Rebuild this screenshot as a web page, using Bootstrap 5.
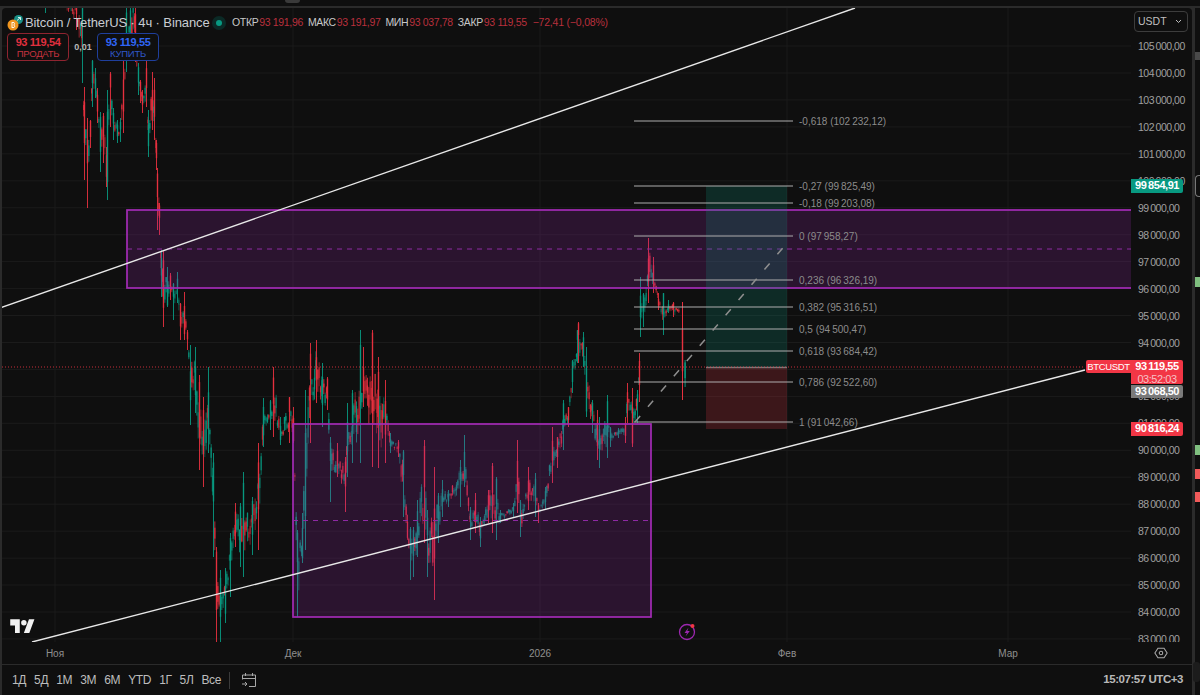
<!DOCTYPE html>
<html lang="ru">
<head>
    <meta charset="UTF-8">
    <meta name="viewport" content="width=device-width, initial-scale=1.0">
    <title>BTCUSDT</title>
    <link href="https://cdn.jsdelivr.net/npm/bootstrap@5.3.0/dist/css/bootstrap.min.css" rel="stylesheet">
    <style>
        html, body { height: 695px; overflow: hidden; }
        body { background: #2b2b2b; color: #c8c8c8; font-family: "Liberation Sans", Arial, sans-serif; font-size: 11px; }
        .top-strip { height: 6px; background: #0f0f0f; margin-bottom: 2px; }
        .top-tab { width: 15px; height: 3px; margin-left: 285px; background: #3a3a3a; border-radius: 0 0 3px 3px; }
        .app-row { height: 687px; }
        .chart-panel { width: 1190px; margin-left: 2px; background: #0f0f0f; border-radius: 4px 4px 0 0; }
        .chart-row { height: 634px; }
        .pane { width: 1129px; height: 634px; overflow: hidden; }
        .pane svg { display: block; }
        .price-axis { width: 61px; height: 634px; overflow: hidden; }

        .legend-row { top: 6px; left: 5px; height: 17px; white-space: nowrap; }
        .legend-title { font-size: 13px; color: #c9ccd2; letter-spacing: -.1px; margin-left: 1px; width: 187px; }
        .market-dot { width: 14px; height: 14px; border-radius: 50%; background: #0b2a26; margin-right: 6px; }
        .market-dot i { width: 6px; height: 6px; border-radius: 50%; background: #089981; display: block; }
        .ohlc { letter-spacing: -.35px; font-size: 10.5px; color: #c8c8c8; margin-right: 5px; }
        .ohlc b { font-weight: 400; color: #b9303d; margin-left: 1px; }
        .ohlc-change { font-size: 10.5px; color: #b9303d; letter-spacing: -.2px; margin-left: 1px; }

        .trade-row { top: 25px; left: 5px; }
        .trade-box { width: 62px; height: 28px; background: #0f0f0f; border: 1px solid; border-radius: 4px; line-height: 1; padding-top: 3px; }
        .trade-box strong { display: block; font-size: 11px; font-weight: 700; letter-spacing: -.4px; margin-bottom: 1px; }
        .trade-box span { display: block; font-size: 9.5px; letter-spacing: -.25px; }
        .sell-box { color: #e0303f; border-color: #8f2430; }
        .sell-box span { color: #c4323f; }
        .buy-box { color: #2f66f5; border-color: #1f3f9c; }
        .buy-box span { color: #2f58c8; }
        .lot-size { width: 28px; font-size: 9px; font-weight: 700; color: #b8b8b8; line-height: 28px; }

        .tv-logo { left: 8px; top: 610px; }
        .symbol-tag { right: 0; top: 352px; width: 45px; height: 13px; line-height: 13px; background: #f23645; color: #fff; font-size: 9.5px; letter-spacing: -.35px; border-radius: 2px 0 0 2px; }
        .bolt-icon { left: 675px; top: 614px; }

        .unit-select { top: 3px; left: 3px; width: 54px; height: 21px; border: 1px solid #3d3d3d; border-radius: 4px; padding: 0 5px 0 3px; font-size: 10.5px; color: #c0c0c0; }
        .axis-price { left: 7px; font-size: 10.5px; letter-spacing: -.5px; color: #a0a0a0; line-height: 12px; white-space: nowrap; }
        .axis-tag { left: 0; width: 52px; color: #fff; font-size: 11px; letter-spacing: -.45px; border-radius: 0 2px 2px 0; line-height: 13px; }
        .tag-up { top: 171px; height: 14px; background: #089981; font-weight: 700; }
        .tag-last { top: 352px; height: 24px; background: #f23645; font-weight: 700; }
        .tag-last em { display: block; font-style: normal; font-weight: 400; color: #f7c1c6; }
        .tag-mark { top: 377px; height: 13px; background: #7a7a7a; font-weight: 700; }
        .tag-stop { top: 414px; height: 14px; background: #f23645; font-weight: 700; }

        .time-axis { height: 22px; }
        .time-label { top: 4px; font-size: 10px; color: #8f8f8f; transform: translateX(-50%); white-space: nowrap; }
        .axis-gear { left: 1152px; top: 4px; }
        .range-bar { height: 31px; border-top: 1px solid #2b2b2b; padding-left: 10px; padding-right: 9px; }
        .range-btn { font-size: 12px; color: #bdbdbd; letter-spacing: -.35px; }
        .range-sep { width: 1px; height: 17px; background: #3a3a3a; margin: 0 11px 0 8px; }
        .clock { font-size: 11.5px; font-weight: 700; color: #b8b8b8; letter-spacing: -.45px; }

        .side-rail { width: 5px; margin-left: 3px; background: #0f0f0f; }
        .rail-item { height: 10px; }
        .rail-gray { margin-top: 44px; height: 8px; background: #4a4a4a; }
        .rail-box { margin-top: 115px; height: 22px; border: 1px solid #777; border-right: 0; border-radius: 4px 0 0 4px; }
        .rail-up-a { margin-top: 80px; background: #7fbf7f; }
        .rail-up-b { margin-top: 158px; background: #7fbf7f; }
        .rail-dn-a { margin-top: 14px; background: #f15a5a; }
        .rail-dn-b { margin-top: 13px; background: #f15a5a; }
        .rail-toggle { left: 1193px; top: 654px; width: 7px; height: 20px; background: #1c1c1c; border-radius: 3px; }
    </style>
</head>
<body>
    <div class="top-strip"><div class="top-tab"></div></div>

    <div class="d-flex app-row position-relative">
        <main class="chart-panel d-flex flex-column">
            <div class="chart-row d-flex">
                <div class="pane position-relative">
                    <svg id="chart" width="1129" height="634" viewBox="2 8 1129 634"></svg>

                    <div class="legend-row position-absolute d-flex align-items-center">
                        <svg width="17" height="17" viewBox="0 0 17 17">
                            <circle cx="11.5" cy="5.5" r="4.5" fill="#1b8f86"/>
                            <path d="M10 6.5 L13.5 3.5 M11 3.5 H13.5 V6" stroke="#d8f2ee" fill="none"/>
                            <circle cx="6" cy="11" r="5.5" fill="#f0951f"/>
                            <path d="M5 8.2 V13.8 M5 8.5 H7 Q8.2 9.8 6.8 11 Q8.6 12.2 7 13.5 H5" stroke="#fff" stroke-width=".9" fill="none"/>
                        </svg>
                        <span class="legend-title">Bitcoin / TetherUS · 4ч · Binance</span>
                        <span class="market-dot d-flex align-items-center justify-content-center"><i></i></span>
                        <span class="ohlc">ОТКР<b>93 191,96</b></span>
                        <span class="ohlc">МАКС<b>93 191,97</b></span>
                        <span class="ohlc">МИН<b>93 037,78</b></span>
                        <span class="ohlc">ЗАКР<b>93 119,55</b></span>
                        <span class="ohlc-change">−72,41 (−0,08%)</span>
                    </div>

                    <div class="trade-row position-absolute d-flex text-center">
                        <div class="trade-box sell-box"><strong>93 119,54</strong><span>ПРОДАТЬ</span></div>
                        <div class="lot-size">0,01</div>
                        <div class="trade-box buy-box"><strong>93 119,55</strong><span>КУПИТЬ</span></div>
                    </div>

                    <svg class="tv-logo position-absolute" width="25" height="15" viewBox="0 0 36 22" fill="#f2f2f2">
                        <path d="M14 22H7V11H0V2h14v20zM28 22h-8l7.5-20h8L28 22z"/>
                        <circle cx="20" cy="7" r="4"/>
                    </svg>

                    <svg class="bolt-icon position-absolute" width="22" height="20" viewBox="0 0 22 20">
                        <circle cx="10" cy="10" r="7.5" fill="none" stroke="#9c27b0" stroke-width="1.3"/>
                        <path d="M11.5 5.5 L7.5 11 H10 L8.5 14.5 L12.8 9 H10.3 Z" fill="#9c27b0"/>
                        <circle cx="15.5" cy="4" r="2" fill="#f23645"/>
                    </svg>

                    <div class="symbol-tag position-absolute text-center">BTCUSDT</div>
                </div>

                <div class="price-axis position-relative" id="priceAxis">
                    <div class="unit-select position-absolute d-flex align-items-center justify-content-between">
                        <span>USDT</span>
                        <svg width="7" height="5" viewBox="0 0 7 5"><path d="M1 1 L3.5 3.5 L6 1" fill="none" stroke="#c0c0c0"/></svg>
                    </div>
                </div>
            </div>

            <div class="time-axis position-relative" id="timeAxis">
                <svg class="axis-gear position-absolute" width="14" height="14" viewBox="0 0 16 16">
                    <path d="M4.5 2.5 H11.5 L15 8 L11.5 13.5 H4.5 L1 8 Z" fill="none" stroke="#a8a8a8" stroke-width="1.2"/>
                    <circle cx="8" cy="8" r="2" fill="none" stroke="#a8a8a8" stroke-width="1.2"/>
                </svg>
            </div>

            <div class="range-bar d-flex align-items-center">
                <div class="d-flex gap-2" id="rangeBtns"></div>
                <div class="range-sep"></div>
                <svg width="16" height="16" viewBox="0 0 16 16" fill="none" stroke="#a8a8a8" stroke-width="1">
                    <path d="M1.5 7.5 V3 H14.5 V14.5 H8 M1.5 6.5 H14.5 M4.5 1 V4 M11.5 1 V4 M1 12 H6 M4 10 L6 12 L4 14"/>
                </svg>
                <div class="clock ms-auto">15:07:57 UTC+3</div>
            </div>
        </main>

        <aside class="side-rail d-flex flex-column">
            <div class="rail-item rail-gray"></div>
            <div class="rail-item rail-box"></div>
            <div class="rail-item rail-up-a"></div>
            <div class="rail-item rail-up-b"></div>
            <div class="rail-item rail-dn-a"></div>
            <div class="rail-item rail-dn-b"></div>
        </aside>
        <div class="rail-toggle position-absolute"></div>
    </div>

    <script>
        // price -> y in page pixels
        const yOf = p => 46 + (105000 - p) * 0.02695;
        const fmt = n => String(n).replace(/\B(?=(\d{3})(?!\d))/g, "\u2009") + ",00";

        // x, top of the wicks, bottom of the wicks, read off the picture
        const shape = [[45,-5,13],[60,-5,4],[76,-5,30],[82,-5,83],[84,87,180],[87,118,208],[90,120,148],[92,60,107],[95,68,98],[97,88,123],[100,112,172],[103,113,163],[106,147,187],[107,90,200],[110,72,127],[113,108,140],[117,120,143],[120,118,142],[123,60,133],[126,8,72],[130,-5,50],[135,-5,62],[138,63,95],[140,80,103],[142,90,113],[146,60,107],[148,110,157],[152,72,130],[154,78,140],[156,140,170],[157,168,230],[159,203,235],[161,250,297],[163,250,327],[167,267,307],[170,273,300],[173,283,320],[177,272,303],[180,303,340],[184,292,340],[187,330,350],[190,345,425],[195,347,413],[199,375,470],[203,397,487],[208,367,453],[213,453,557],[216,547,645],[220,570,645],[225,568,623],[230,533,597],[235,503,547],[240,503,567],[243,472,577],[252,497,555],[258,443,550],[263,398,447],[270,400,430],[273,367,437],[280,417,445],[289,397,443],[293,407,443],[297,530,617],[302,513,563],[305,390,550],[310,343,443],[316,340,403],[322,363,427],[327,377,410],[330,437,502],[337,443,477],[345,457,512],[347,403,477],[352,390,463],[360,330,463],[363,347,407],[372,330,467],[378,357,468],[385,380,463],[390,433,453],[398,440,457],[403,450,517],[410,527,580],[413,527,577],[417,500,557],[424,440,543],[427,510,577],[434,467,600],[438,493,543],[442,480,517],[448,490,507],[460,460,507],[464,435,487],[470,507,540],[475,493,533],[480,517,547],[488,490,523],[492,463,533],[496,477,540],[500,510,523],[513,503,517],[517,440,513],[520,500,537],[528,467,510],[535,473,517],[538,503,523],[545,487,510],[552,427,483],[557,437,468],[563,400,450],[568,407,427],[572,360,393],[577,330,363],[578,322,363],[583,332,367],[586,347,417],[592,400,433],[597,410,460],[599,417,468],[607,395,458],[610,427,447],[618,428,438],[625,417,443],[627,383,423],[632,388,447],[637,390,423],[639,353,402],[640,277,337],[643,293,327],[648,238,303],[653,257,293],[658,293,310],[663,293,335],[668,300,313],[673,302,317],[680,302,318]];

        let seed = 20260113;
        const rnd = () => { seed = (seed * 16807) % 2147483647; return seed / 2147483647; };
        const RED = "#e8313f", GREEN = "#089981";

        function candle(x, hi, lo, color, alpha) {
            const span = lo - hi;
            const top = hi + span * rnd() * 0.35;
            const h = Math.max(1, span * (0.25 + rnd() * 0.4));
            return `<rect x="${x.toFixed(2)}" y="${hi.toFixed(1)}" width="1" height="${span.toFixed(1)}" fill="${color}" opacity="${alpha}"/>` +
                   `<rect x="${(x - 0.2).toFixed(2)}" y="${top.toFixed(1)}" width="1.4" height="${h.toFixed(1)}" fill="${color}" opacity="${alpha}"/>`;
        }

        let candles = "";
        for (let i = 0; i < shape.length - 1; i++) {
            const [x0, h0, l0] = shape[i], [x1, h1, l1] = shape[i + 1];
            const prevMid = (h0 + l0) / 2, nextMid = (h1 + l1) / 2;
            const falling = nextMid > prevMid;
            candles += candle(x0, h0, l0, rnd() < (falling ? 0.62 : 0.25) ? RED : GREEN, 0.9);
            for (let x = x0 + 1.33; x < x1 - 0.6; x += 1.33) {
                const t = (x - x0) / (x1 - x0);
                const hi = h0 + (h1 - h0) * t, lo = l0 + (l1 - l0) * t;
                const half = (lo - hi) / 2 * (0.15 + rnd() * 0.3);
                const mid = hi + (lo - hi) * (0.35 + rnd() * 0.3);
                candles += candle(x, mid - half, mid + half, rnd() < (falling ? 0.6 : 0.28) ? RED : GREEN, (0.45 + rnd() * 0.4).toFixed(2));
            }
        }
        candles += candle(682, 302, 400, RED, 1) + candle(684.6, 360, 387, GREEN, 0.95);

        let grid = "";
        for (let p = 83000; p <= 105000; p += 1000) {
            grid += `<line x1="2" x2="1131" y1="${yOf(p).toFixed(1)}" y2="${yOf(p).toFixed(1)}" stroke="#1b1b1b"/>`;
        }
        const months = [["Ноя", 55], ["Дек", 293], ["2026", 540], ["Фев", 787], ["Мар", 1008]];
        months.forEach(m => { grid += `<line x1="${m[1]}" x2="${m[1]}" y1="8" y2="642" stroke="#1b1b1b"/>`; });

        const zone = (x1, x2, y1, y2) => {
            const mid = (y1 + y2) / 2;
            return `<rect x="${x1}" y="${y1}" width="${x2 - x1}" height="${y2 - y1}" fill="#9c27b0" fill-opacity=".2" stroke="#a32bb5" stroke-width="1.7"/>` +
                   `<line x1="${x1}" x2="${x2}" y1="${mid}" y2="${mid}" stroke="#8e2aa3" stroke-dasharray="5 5"/>`;
        };

        const fibs = [["-0,618 (102 232,12)", 121], ["-0,27 (99 825,49)", 186], ["-0,18 (99 203,08)", 203], ["0 (97 958,27)", 236], ["0,236 (96 326,19)", 280], ["0,382 (95 316,51)", 307], ["0,5 (94 500,47)", 329], ["0,618 (93 684,42)", 351], ["0,786 (92 522,60)", 382], ["1 (91 042,66)", 422]];
        let fibMarkup = "";
        fibs.forEach(f => {
            fibMarkup += `<line x1="634" x2="793" y1="${f[1]}" y2="${f[1]}" stroke="#adadad" stroke-width="1.2"/>` +
                `<text x="799" y="${f[1] + 3.5}" font-size="10" fill="#8c8c8c" font-family="Liberation Sans">${f[0].replace(/(\d) (\d{3})/, "$1\u2009$2")}</text>`;
        });

        document.getElementById("chart").innerHTML = grid + candles +
            zone(127, 1140, 210, 288) + zone(293, 651, 424, 617) +
            `<rect x="706" y="186" width="81" height="181" fill="#089981" fill-opacity=".2"/>` +
            `<rect x="706" y="367" width="81" height="62" fill="#f23645" fill-opacity=".2"/>` +
            `<line x1="706" x2="787" y1="367.5" y2="367.5" stroke="#7a7a7a" stroke-width="1.5"/>` +
            `<line x1="2" x2="1085" y1="367" y2="367" stroke="#f23645" stroke-opacity=".8" stroke-dasharray="1 2"/>` +
            fibMarkup +
            `<line x1="635" y1="422" x2="787" y2="243" stroke="#8f8f8f" stroke-width="1.5" stroke-dasharray="8 12"/>` +
            `<line x1="0" y1="308" x2="855" y2="8" stroke="#e8e8e8" stroke-width="1.4"/>` +
            `<line x1="32" y1="642" x2="1085" y2="370" stroke="#e8e8e8" stroke-width="1.4"/>`;

        // price scale, the tags go on top of it
        const axis = document.getElementById("priceAxis");
        let axisHtml = "";
        for (let p = 105000; p >= 83000; p -= 1000) {
            axisHtml += `<div class="axis-price position-absolute" style="top:${(yOf(p) - 14).toFixed(1)}px">${fmt(p)}</div>`;
        }
        axisHtml += `<div class="axis-tag tag-up position-absolute text-center">99\u2009854,91</div>` +
            `<div class="axis-tag tag-last position-absolute text-center">93\u2009119,55<em>03:52:03</em></div>` +
            `<div class="axis-tag tag-mark position-absolute text-center">93\u2009068,50</div>` +
            `<div class="axis-tag tag-stop position-absolute text-center">90\u2009816,24</div>`;
        axis.insertAdjacentHTML("beforeend", axisHtml);

        const timeAxis = document.getElementById("timeAxis");
        months.forEach(m => {
            timeAxis.insertAdjacentHTML("beforeend", `<div class="time-label position-absolute" style="left:${m[1] - 2}px">${m[0]}</div>`);
        });

        document.getElementById("rangeBtns").innerHTML = ["1Д", "5Д", "1М", "3М", "6М", "YTD", "1Г", "5Л", "Все"]
            .map(t => `<span class="range-btn">${t}</span>`).join("");
    </script>
    <script src="https://cdn.jsdelivr.net/npm/bootstrap@5.3.0/dist/js/bootstrap.bundle.min.js"></script>
</body>
</html>
